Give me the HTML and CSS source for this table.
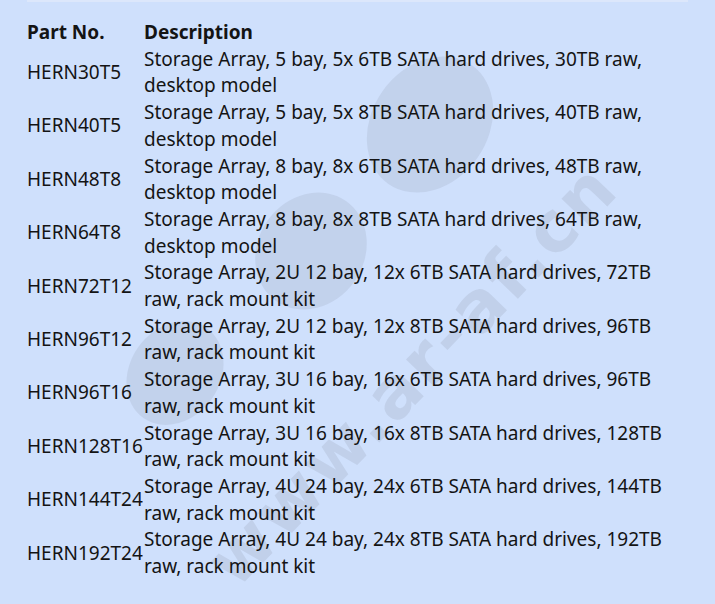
FILE: index.html
```html
<!DOCTYPE html>
<html>
<head>
<meta charset="utf-8">
<link rel="stylesheet" href="styles.css">
</head>
<body>
<div class="page">
  <div class="watermark" aria-hidden="true">
    <div class="blob blob1"></div>
    <div class="blob blob2"></div>
    <div class="blob blob3"></div>
    <div class="wmtext">www.ar-af.cn</div>
  </div>
  <table class="parts">
    <thead>
      <tr><th class="pn">Part No.</th><th class="desc">Description</th></tr>
    </thead>
    <tbody>
      <tr><td class="pn">HERN30T5</td><td class="desc">Storage Array, 5 bay, 5x 6TB SATA hard drives, 30TB raw, desktop model</td></tr>
      <tr><td class="pn">HERN40T5</td><td class="desc">Storage Array, 5 bay, 5x 8TB SATA hard drives, 40TB raw, desktop model</td></tr>
      <tr><td class="pn">HERN48T8</td><td class="desc">Storage Array, 8 bay, 8x 6TB SATA hard drives, 48TB raw, desktop model</td></tr>
      <tr><td class="pn">HERN64T8</td><td class="desc">Storage Array, 8 bay, 8x 8TB SATA hard drives, 64TB raw, desktop model</td></tr>
      <tr><td class="pn">HERN72T12</td><td class="desc">Storage Array, 2U 12 bay, 12x 6TB SATA hard drives, 72TB raw, rack mount kit</td></tr>
      <tr><td class="pn">HERN96T12</td><td class="desc">Storage Array, 2U 12 bay, 12x 8TB SATA hard drives, 96TB raw, rack mount kit</td></tr>
      <tr><td class="pn">HERN96T16</td><td class="desc">Storage Array, 3U 16 bay, 16x 6TB SATA hard drives, 96TB raw, rack mount kit</td></tr>
      <tr><td class="pn">HERN128T16</td><td class="desc">Storage Array, 3U 16 bay, 16x 8TB SATA hard drives, 128TB raw, rack mount kit</td></tr>
      <tr><td class="pn">HERN144T24</td><td class="desc">Storage Array, 4U 24 bay, 24x 6TB SATA hard drives, 144TB raw, rack mount kit</td></tr>
      <tr><td class="pn">HERN192T24</td><td class="desc">Storage Array, 4U 24 bay, 24x 8TB SATA hard drives, 192TB raw, rack mount kit</td></tr>
    </tbody>
  </table>
</div>
</body>
</html>
```
FILE: styles.css
```css
html, body {
  margin: 0;
  padding: 0;
  background: #cfe0fc;
}
.page {
  position: relative;
  width: 715px;
  height: 604px;
  overflow: hidden;
  background: #cfe0fc;
  font-family: "Noto Sans", "Open Sans", sans-serif;
  color: #141414;
}
.page::before {
  content: "";
  display: block;
  margin-left: 27px;
  width: 661px;
  height: 2px;
  background: #dce7fb;
}
.parts {
  position: relative;
  z-index: 2;
  margin: 17px 0 0 27px;
  border-collapse: collapse;
  width: 661px;
  font-size: 19px;
  line-height: 26.7px;
}
.parts th, .parts td {
  padding: 0;
  text-align: left;
  vertical-align: middle;
}
.parts th {
  font-weight: 700;
}
.parts .pn {
  width: 117px;
  white-space: nowrap;
}
.watermark {
  position: absolute;
  inset: 0;
  z-index: 1;
  pointer-events: none;
}
.blob {
  position: absolute;
  background: rgba(150, 160, 180, 0.22);
  border-radius: 50%;
}
.blob1 {
  left: 372px; top: 52px; width: 116px; height: 145px;
  transform: rotate(35deg);
}
.blob2 {
  left: 258px; top: 190px; width: 106px; height: 122px;
  transform: rotate(35deg);
}
.blob3 {
  left: 130px; top: 318px; width: 90px; height: 110px;
  transform: rotate(35deg);
}
.wmtext {
  position: absolute;
  left: 242px;
  top: 532px;
  height: 64px;
  line-height: 64px;
  transform: rotate(-46deg);
  transform-origin: left bottom;
  font-family: "DejaVu Sans", sans-serif;
  font-weight: 700;
  font-size: 70px;
  letter-spacing: 3px;
  color: rgba(150, 160, 180, 0.24);
  white-space: nowrap;
}
```
